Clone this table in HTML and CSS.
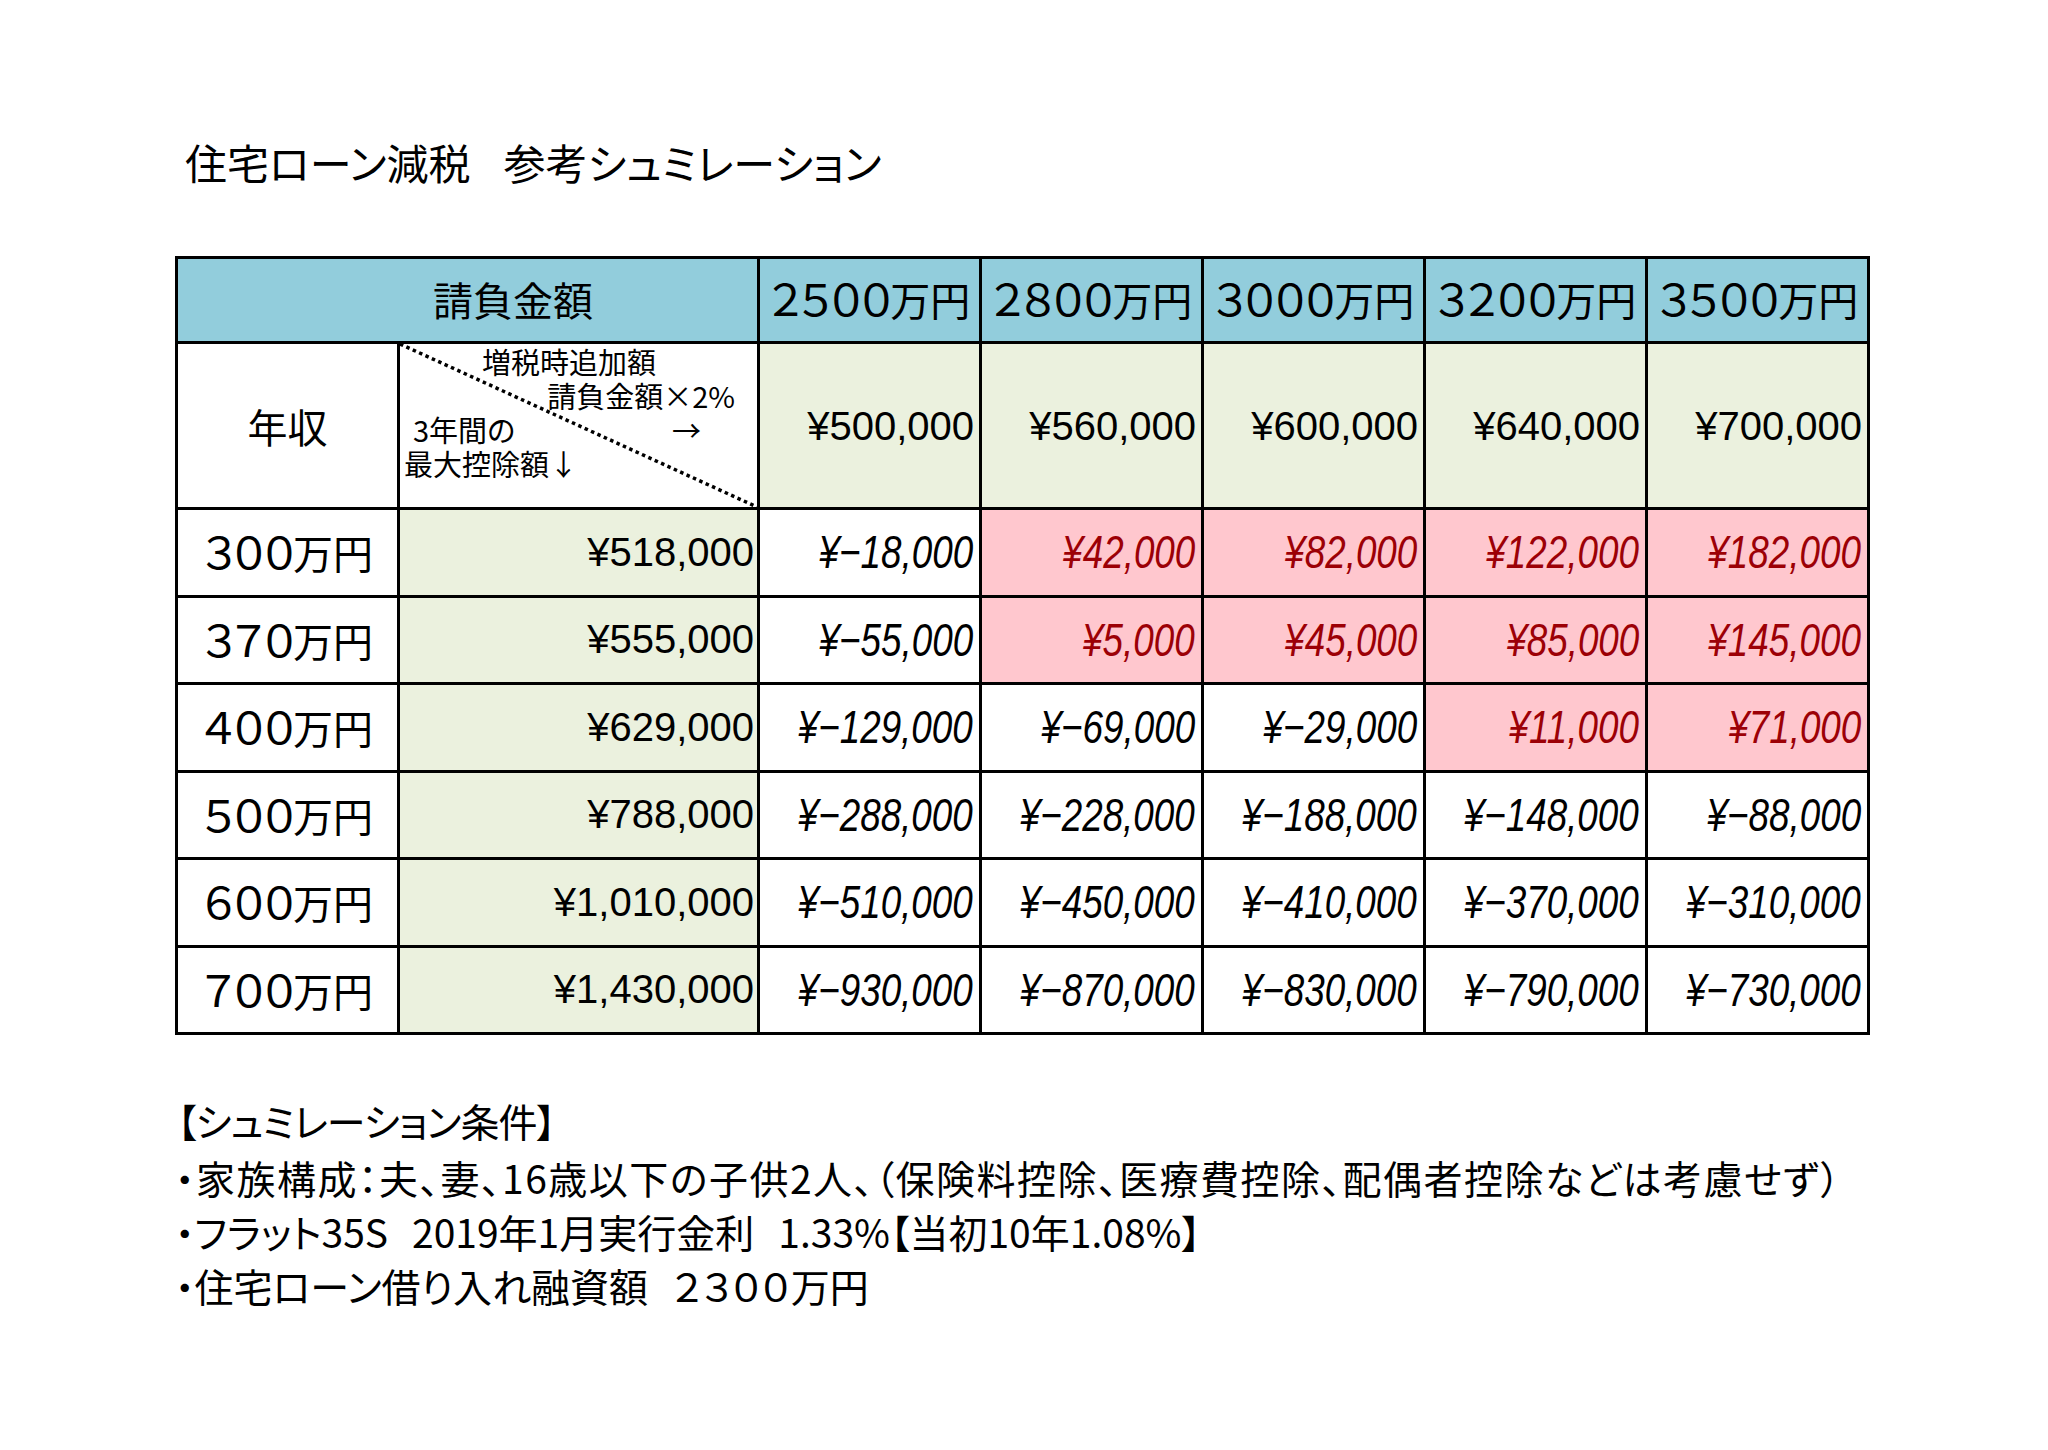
FILE: index.html
```html
<!DOCTYPE html>
<html lang="ja">
<head>
<meta charset="utf-8">
<title>住宅ローン減税 参考シュミレーション</title>
<link rel="stylesheet" href="styles.css">
</head>
<body>
<div class="page">
  <h1 class="title">住宅ローン減税<span class="gap"></span>参考シュミレーション</h1>

  <table class="sim">
    <colgroup>
      <col class="c-label">
      <col class="c-max">
      <col class="c-val"><col class="c-val"><col class="c-val"><col class="c-val"><col class="c-val">
    </colgroup>
    <tr class="r-head">
      <th colspan="2" class="blue price-head">請負金額</th>
      <th class="blue"><span class="fd">２５００</span>万円</th>
      <th class="blue"><span class="fd">２８００</span>万円</th>
      <th class="blue"><span class="fd">３０００</span>万円</th>
      <th class="blue"><span class="fd">３２００</span>万円</th>
      <th class="blue"><span class="fd">３５００</span>万円</th>
    </tr>
    <tr class="r-add">
      <td class="label">年収</td>
      <td class="diag-cell">
        <div class="diag">
          <svg class="diag-line" viewBox="0 0 357 163" preserveAspectRatio="none"><line x1="0" y1="0" x2="357" y2="163"/></svg>
          <div class="dl dl1">増税時追加額</div>
          <div class="dl dl2">請負金額×2%</div>
          <div class="dl dl3"><span>3年間の</span><span>→</span></div>
          <div class="dl dl4">最大控除額↓</div>
        </div>
      </td>
      <td class="green money">¥500,000</td>
      <td class="green money">¥560,000</td>
      <td class="green money">¥600,000</td>
      <td class="green money">¥640,000</td>
      <td class="green money">¥700,000</td>
    </tr>
    <tr class="r-data">
      <td class="label"><span class="fd">３００</span>万円</td>
      <td class="green money">¥518,000</td>
      <td class="diff"><span class="n">¥−18,000</span></td>
      <td class="diff pos"><span class="n">¥42,000</span></td>
      <td class="diff pos"><span class="n">¥82,000</span></td>
      <td class="diff pos"><span class="n">¥122,000</span></td>
      <td class="diff pos"><span class="n">¥182,000</span></td>
    </tr>
    <tr class="r-data">
      <td class="label"><span class="fd">３７０</span>万円</td>
      <td class="green money">¥555,000</td>
      <td class="diff"><span class="n">¥−55,000</span></td>
      <td class="diff pos"><span class="n">¥5,000</span></td>
      <td class="diff pos"><span class="n">¥45,000</span></td>
      <td class="diff pos"><span class="n">¥85,000</span></td>
      <td class="diff pos"><span class="n">¥145,000</span></td>
    </tr>
    <tr class="r-data">
      <td class="label"><span class="fd">４００</span>万円</td>
      <td class="green money">¥629,000</td>
      <td class="diff"><span class="n">¥−129,000</span></td>
      <td class="diff"><span class="n">¥−69,000</span></td>
      <td class="diff"><span class="n">¥−29,000</span></td>
      <td class="diff pos"><span class="n">¥11,000</span></td>
      <td class="diff pos"><span class="n">¥71,000</span></td>
    </tr>
    <tr class="r-data">
      <td class="label"><span class="fd">５００</span>万円</td>
      <td class="green money">¥788,000</td>
      <td class="diff"><span class="n">¥−288,000</span></td>
      <td class="diff"><span class="n">¥−228,000</span></td>
      <td class="diff"><span class="n">¥−188,000</span></td>
      <td class="diff"><span class="n">¥−148,000</span></td>
      <td class="diff"><span class="n">¥−88,000</span></td>
    </tr>
    <tr class="r-data">
      <td class="label"><span class="fd">６００</span>万円</td>
      <td class="green money">¥1,010,000</td>
      <td class="diff"><span class="n">¥−510,000</span></td>
      <td class="diff"><span class="n">¥−450,000</span></td>
      <td class="diff"><span class="n">¥−410,000</span></td>
      <td class="diff"><span class="n">¥−370,000</span></td>
      <td class="diff"><span class="n">¥−310,000</span></td>
    </tr>
    <tr class="r-data">
      <td class="label"><span class="fd">７００</span>万円</td>
      <td class="green money">¥1,430,000</td>
      <td class="diff"><span class="n">¥−930,000</span></td>
      <td class="diff"><span class="n">¥−870,000</span></td>
      <td class="diff"><span class="n">¥−830,000</span></td>
      <td class="diff"><span class="n">¥−790,000</span></td>
      <td class="diff"><span class="n">¥−730,000</span></td>
    </tr>
  </table>

  <div class="notes">
    <p class="note-head">【シュミレーション条件】</p>
    <p class="note-wide">・家族構成：夫、妻、16歳以下の子供2人、（保険料控除、医療費控除、配偶者控除などは考慮せず）</p>
    <p>・フラット35S<span class="sp"></span>2019年1月実行金利<span class="sp"></span>1.33%【当初10年1.08%】</p>
    <p>・住宅ローン借り入れ融資額<span class="sp"></span><span class="fd">２３００</span>万円</p>
  </div>
</div>
</body>
</html>
```

FILE: styles.css
```css
* { box-sizing: border-box; }
html, body { margin: 0; padding: 0; background: #fff; }
body {
  font-family: "Noto Sans CJK JP", "Noto Sans", sans-serif;
  color: #000;
  font-feature-settings: "palt";
}
.page {
  width: 2048px;
  height: 1450px;
  padding: 138px 0 0 175px;
}
.title {
  margin: 0 0 0 10px;
  font-size: 42px;
  font-weight: 400;
  line-height: 48px;
  height: 48px;
}
.title .gap { display: inline-block; width: 33px; }

/* full-width digits, slightly enlarged like the reference's gothic numerals */
.fd { font-size: 1.1em; letter-spacing: -0.07em; line-height: 1; }

.sim {
  margin-top: 70px;
  border-collapse: separate;
  border-spacing: 0;
  table-layout: fixed;
  width: 1695px;
  border-left: 3px solid #000;
  border-top: 3px solid #000;
}
.c-label { width: 222px; }
.c-max { width: 360px; }
.c-val { width: 222px; }
:where(.sim th, .sim td) {
  border-right: 3px solid #000;
  border-bottom: 3px solid #000;
  padding: 0;
  font-weight: 400;
  white-space: nowrap;
}
.r-head { height: 85px; }
.r-add { height: 166px; }
.r-data { height: 87.5px; }

.blue { background: #92cddc; font-size: 40px; text-align: center; padding-bottom: 3px; }
.blue.price-head { padding-left: 91px; }
.label { font-size: 40px; text-align: center; }
.green { background: #ebf1de; }
.money {
  font-family: "Liberation Sans", Arial, sans-serif;
  font-size: 40px;
  text-align: right;
  padding-right: 3px;
}
.r-add .money { padding-right: 5px; padding-top: 2px; }
.diff {
  font-family: "Liberation Sans", Arial, sans-serif;
  font-style: italic;
  font-size: 46px;
  text-align: right;
  padding-right: 6px;
}
.diff .n {
  display: inline-block;
  margin-left: -60px;
  transform: scaleX(0.8);
  transform-origin: right center;
}
.pos { background: #ffc7ce; color: #9c0006; }

.diag-cell { vertical-align: top; }
.diag {
  position: relative;
  height: 163px;
  font-size: 29px;
  line-height: 34px;
}
.diag-line {
  position: absolute;
  left: 0; top: 0;
  width: 100%; height: 100%;
}
.diag-line line {
  stroke: #000;
  stroke-width: 3.5;
  stroke-dasharray: 3.5 3.5;
}
.dl { position: relative; }
.dl1 { padding-left: 82px; }
.dl2 { text-align: right; padding-right: 22px; font-feature-settings: normal; }
.dl3 { display: flex; justify-content: space-between; padding: 0 56px 0 13px; }
.dl4 { padding-left: 4px; }

.notes {
  margin-top: 56px;
  font-size: 39px;
  line-height: 54px;
}
.notes p { margin: 0; }
.notes .note-head { line-height: 59px; margin-left: 2px; letter-spacing: -1px; }
.notes .note-wide { letter-spacing: 1.5px; }
.notes .sp { display: inline-block; width: 24px; }
.notes .fd { font-size: 1em; letter-spacing: 0; }
```
